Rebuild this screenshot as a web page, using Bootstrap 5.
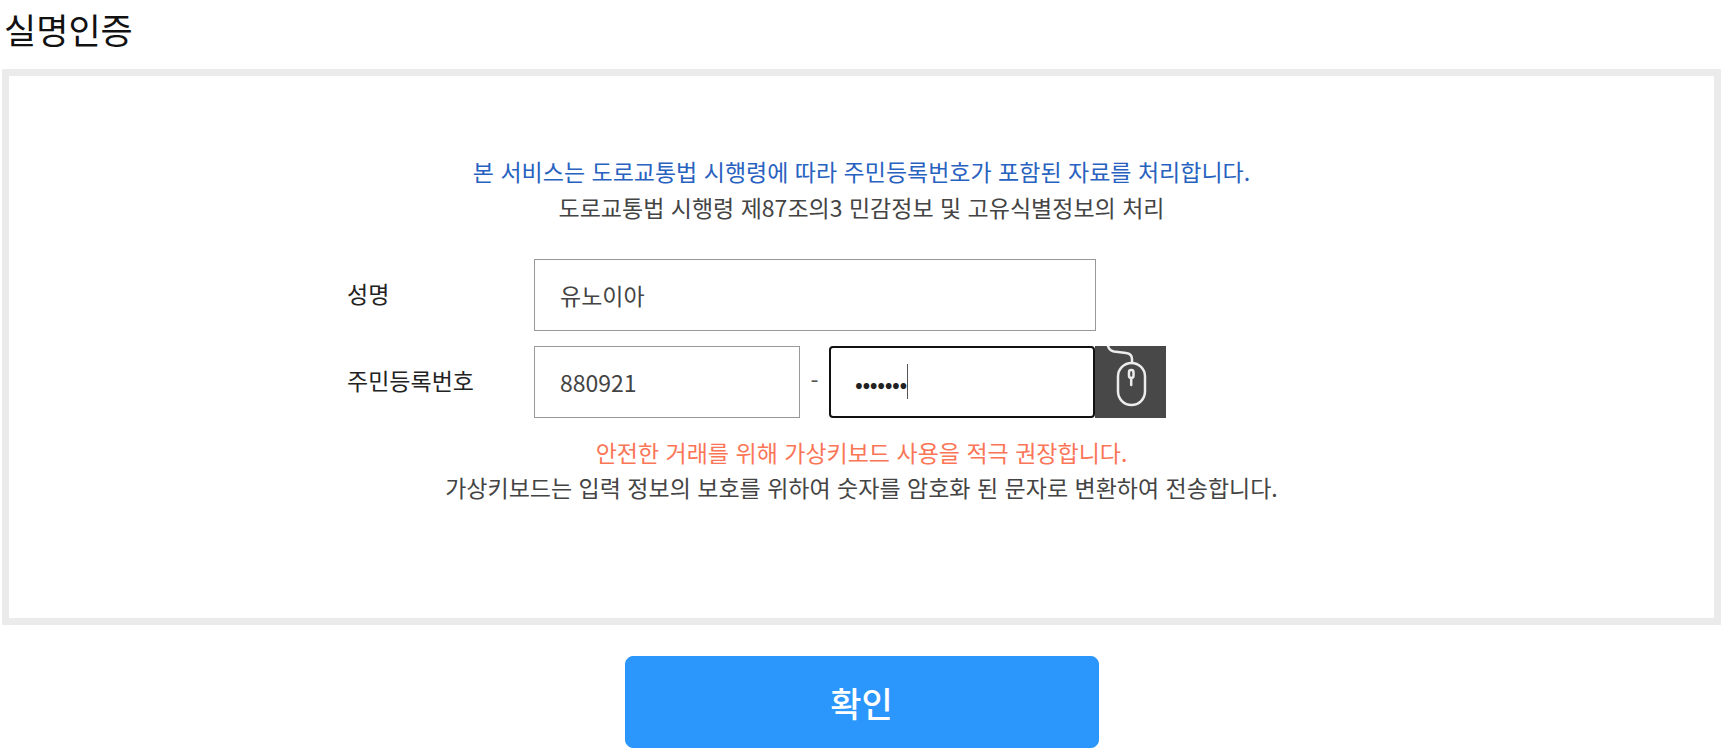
<!DOCTYPE html>
<html lang="ko">
<head>
<meta charset="UTF-8">
<title>실명인증</title>
<link href="https://cdn.jsdelivr.net/npm/bootstrap@5.3.0/dist/css/bootstrap.min.css" rel="stylesheet">
<style>
body { font-family: "Noto Sans CJK KR", "Noto Sans", sans-serif; background: #fff; color: #444; font-size: 23px; }
.page-shell { margin: 0 10px 0 2px; }
.page-title { font-size: 35px; line-height: 50px; font-weight: 400; color: #111; margin: 4px 0 15px 2px; }
.auth-box { height: 556px; border: 7px solid #ebebeb; padding-top: 77px; }
.notice { line-height: 36px; text-align: center; }
.notice-low { line-height: 35px; }
.notice-blue { color: #2862c0; }
.notice-red { color: #fb7557; }
.form-wrap { margin: 34px 0 17px 338px; }
.field-row { height: 72px; margin-bottom: 15px; }
.field-row:last-child { margin-bottom: 0; }
.field-label { width: 187px; color: #222; padding-bottom: 4px; }
.fake-input { height: 72px; border: 1px solid #999; padding-left: 25px; color: #444; border-radius: 0; }
.w-name { width: 562px; }
.w-front { width: 266px; }
.dash-sep { width: 29px; text-align: center; color: #555; padding-bottom: 4px; }
.w-back { width: 266px; margin-top: -1px; border: 2px solid #111; border-radius: 4px; padding-left: 24px; }
.caret-bar { width: 1px; height: 35px; background: #555; }
.pw-dots { font-size: 23px; letter-spacing: -.4px; line-height: 1; color: #222; padding-top: 3px; }
.mouse-btn { width: 71px; height: 72px; background: #484848; border: 0; padding: 0; margin-top: -1px; }
.confirm-row { margin-top: 31px; }
.confirm-btn { width: 474px; height: 92px; background: #2b96fb; border-color: #2b96fb; color: #fff; font-size: 34px; font-weight: 500; border-radius: 8px; }
</style>
</head>
<body>
<div class="page-shell">
  <h1 class="page-title">실명인증</h1>
  <div class="auth-box">
    <p class="notice notice-blue mb-0">본 서비스는 도로교통법 시행령에 따라 주민등록번호가 포함된 자료를 처리합니다.</p>
    <p class="notice mb-0">도로교통법 시행령 제87조의3 민감정보 및 고유식별정보의 처리</p>
    <div class="form-wrap">
      <div class="field-row d-flex align-items-center">
        <span class="field-label">성명</span>
        <div class="fake-input w-name d-flex align-items-center">유노이아</div>
      </div>
      <div class="field-row d-flex align-items-center">
        <span class="field-label">주민등록번호</span>
        <div class="fake-input w-front d-flex align-items-center">880921</div>
        <span class="dash-sep">-</span>
        <div class="fake-input w-back d-flex align-items-center"><span class="pw-dots">•••••••</span><span class="caret-bar"></span></div>
        <button type="button" class="mouse-btn d-flex align-items-center justify-content-center" aria-label="가상키보드">
          <svg width="71" height="72" viewBox="0 0 71 72" fill="none" stroke="#ececec" stroke-width="2.500" stroke-linecap="round">
            <path d="M13 0c1 3 3 5 6 5.500l12 1.500c4 .5 6 3 6 6v4"/>
            <rect x="23" y="17" width="27" height="42" rx="13.500"/>
            <rect x="34" y="24" width="4.500" height="8" rx="2.200"/>
            <path d="M36.200 32v7"/>
          </svg>
        </button>
      </div>
    </div>
    <p class="notice notice-low notice-red mb-0">안전한 거래를 위해 가상키보드 사용을 적극 권장합니다.</p>
    <p class="notice notice-low mb-0">가상키보드는 입력 정보의 보호를 위하여 숫자를 암호화 된 문자로 변환하여 전송합니다.</p>
  </div>
  <div class="confirm-row d-flex justify-content-center">
    <button type="button" class="btn confirm-btn">확인</button>
  </div>
</div>
<script src="https://cdn.jsdelivr.net/npm/bootstrap@5.3.0/dist/js/bootstrap.bundle.min.js"></script>
</body>
</html>
